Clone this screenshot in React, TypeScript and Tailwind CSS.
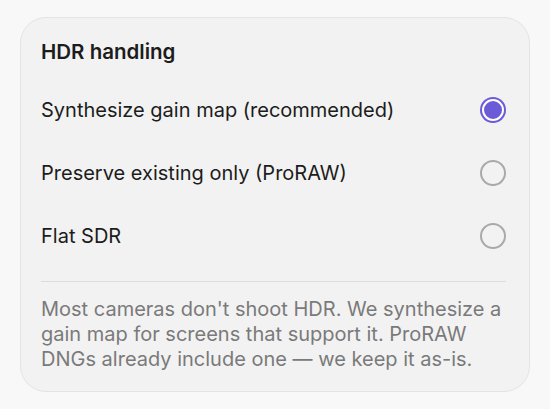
import React, { useState } from 'react';

const options = [
  { id: 'synth', label: 'Synthesize gain map (recommended)' },
  { id: 'preserve', label: 'Preserve existing only (ProRAW)' },
  { id: 'flat', label: 'Flat SDR' },
];

const Radio: React.FC<{ checked: boolean }> = ({ checked }) =>
  checked ? (
    <span className="flex h-[26px] w-[26px] items-center justify-center rounded-full bg-[#6b5bd6]">
      <span className="h-[22px] w-[22px] rounded-full border-2 border-white bg-[#6b5bd6]" />
    </span>
  ) : (
    <span className="h-[26px] w-[26px] rounded-full border-2 border-[#a9a9a9]" />
  );

export default function App() {
  const [value, setValue] = useState('synth');

  return (
    <div className="flex h-[409px] w-[550px] bg-[#f8f8f8] px-5 pt-[17px] font-['Inter',sans-serif]">
      <div className="flex h-[375px] w-full flex-col rounded-[26px] border border-[#e4e4e4] bg-[#f2f2f2] pl-5 pr-[23px] pt-[21px]">
        <h2 className="text-[20.5px] font-semibold leading-[26px] text-[#1c1c1c]">HDR handling</h2>
        <ul className="mt-[32px] flex flex-col gap-[37px]">
          {options.map((o) => (
            <li
              key={o.id}
              onClick={() => setValue(o.id)}
              className="flex h-[26px] cursor-pointer items-center justify-between text-[20px] text-[#1c1c1c]"
            >
              {o.label}
              <Radio checked={value === o.id} />
            </li>
          ))}
        </ul>
        <div className="mt-[32px] h-px bg-[#dcdcdc]" />
        <p className="mt-[15px] whitespace-nowrap text-[20px] leading-[25px] text-[#7a7a7a]">
          Most cameras don't shoot HDR. We synthesize a
          <br />
          gain map for screens that support it. ProRAW
          <br />
          DNGs already include one — we keep it as-is.
        </p>
      </div>
    </div>
  );
}
